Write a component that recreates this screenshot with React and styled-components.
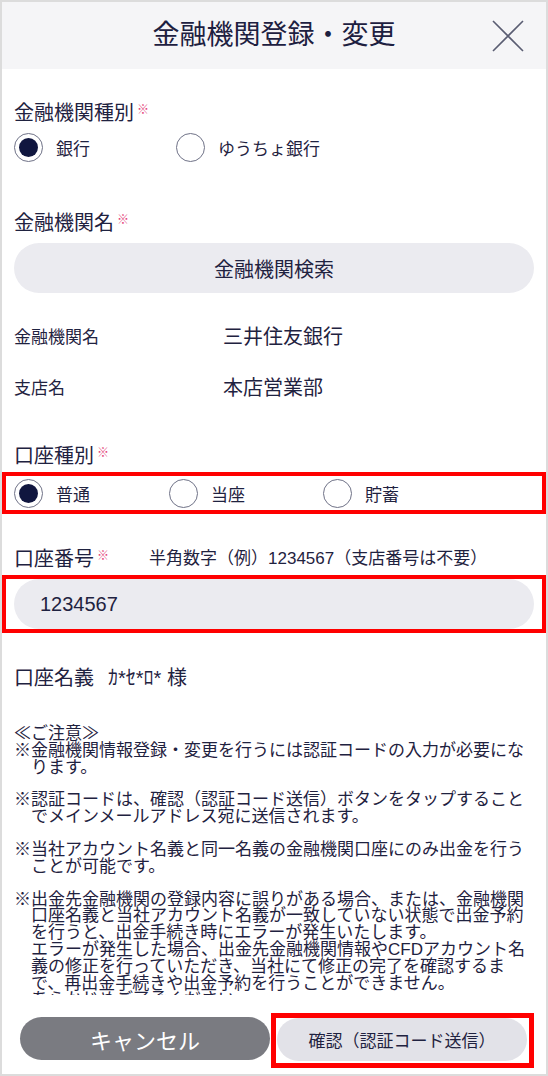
import React from 'react';
import styled, { createGlobalStyle } from 'styled-components';

const GlobalStyle = createGlobalStyle`
  html, body {
    margin: 0;
    padding: 0;
    background: #fff;
  }
  body {
    font-family: "Liberation Sans", "Noto Sans CJK JP", sans-serif;
    color: #1f2240;
  }
  * {
    box-sizing: border-box;
  }
  button, input {
    font-family: inherit;
  }
`;

const Frame = styled.div`
  width: 548px;
  height: 1076px;
  border: 2px solid #dcdcdc;
  display: flex;
  flex-direction: column;
  overflow: hidden;
  background: #fff;
`;

const Header = styled.header`
  flex: none;
  height: 67px;
  background: #f5f5f7;
  display: grid;
  grid-template-columns: 1fr auto 1fr;
  align-items: center;
  padding: 0 22px;
`;

const Title = styled.h1`
  grid-column: 2;
  margin: 0;
  font-size: 27px;
  font-weight: 400;
  color: #1d2040;
  line-height: 1;
`;

const CloseButton = styled.button`
  justify-self: end;
  width: 32px;
  height: 32px;
  padding: 0;
  border: none;
  background: none;
  cursor: pointer;
  display: flex;
`;

const Body = styled.main`
  flex: 1;
  min-height: 0;
  overflow: hidden;
  padding: 30px 12px 0;
`;

const Label = styled.div`
  display: flex;
  align-items: flex-start;
  margin-top: ${p => p.$mt || 0}px;
  font-size: 20px;
  line-height: 28px;
  white-space: nowrap;
`;

const Required = styled.span`
  margin: 5px 0 0 3px;
  font-size: 12px;
  line-height: 1;
  color: #e4467c;
`;

const Hint = styled.span`
  margin-left: 40px;
  font-size: 17px;
`;

const Holder = styled.span`
  margin-left: 14px;
`;

const RadioRow = styled.div`
  display: flex;
  align-items: center;
  height: 30px;
  margin-top: ${p => p.$mt || 0}px;
`;

const Option = styled.label`
  display: flex;
  align-items: center;
  gap: 13px;
  width: ${p => p.$w}px;
  font-size: 17px;
  cursor: pointer;
`;

const Circle = styled.span`
  flex: none;
  width: 29px;
  height: 29px;
  border-radius: 50%;
  border: 1.5px solid #6f7287;
  display: flex;
  align-items: center;
  justify-content: center;

  &::after {
    content: '';
    width: 19px;
    height: 19px;
    border-radius: 50%;
    background: ${p => (p.$on ? '#10163f' : 'transparent')};
  }
`;

const Highlight = styled.div`
  border: ${p => p.$bw || 4}px solid #ff0000;
  margin: ${p => p.$mt || 0}px -12px 0;
  padding: ${p => p.$pad};
`;

const PillButton = styled.button`
  display: block;
  width: 100%;
  height: 50px;
  margin-top: 6px;
  border: none;
  border-radius: 25px;
  background: #ebebf0;
  color: #1f2240;
  font-size: 20px;
`;

const InfoRow = styled.div`
  display: grid;
  grid-template-columns: 209px 1fr;
  align-items: center;
  height: 28px;
  margin-top: ${p => p.$mt || 0}px;
`;

const InfoLabel = styled.span`
  font-size: 17px;
`;

const InfoValue = styled.span`
  font-size: 20px;
`;

const NumberInput = styled.input`
  display: block;
  width: 100%;
  height: 50px;
  border: none;
  border-radius: 25px;
  background: #ebebf0;
  padding: 0 26px;
  font-size: 20px;
  color: #1f2240;
  outline: none;
`;

const Notes = styled.div`
  margin-top: 34px;
  font-size: 17px;
  line-height: 16.8px;
  white-space: nowrap;
`;

const Note = styled.p`
  margin: ${p => (p.$first ? 0 : 16)}px 0 0;
  padding-left: 17px;
  text-indent: -17px;
`;

const Footer = styled.footer`
  flex: none;
  height: 79px;
  display: flex;
  align-items: flex-start;
  padding: 18px 0 0 18px;
`;

const CancelButton = styled.button`
  width: 250px;
  height: 43px;
  margin-top: 4px;
  border: none;
  border-radius: 22px;
  background: #7a7b81;
  color: #fff;
  font-size: 22px;
`;

const ConfirmFrame = styled.div`
  margin-left: 1px;
  border: 5px solid #ff0000;
  padding: 0 2px 2px 1px;
`;

const ConfirmButton = styled.button`
  display: block;
  width: 250px;
  height: 43px;
  border: none;
  border-radius: 22px;
  background: #e2e2e8;
  color: #1f2240;
  font-size: 17px;
`;

const notes = [
  ['※金融機関情報登録・変更を行うには認証コードの入力が必要にな', 'ります。'],
  ['※認証コードは、確認（認証コード送信）ボタンをタップすること', 'でメインメールアドレス宛に送信されます。'],
  ['※当社アカウント名義と同一名義の金融機関口座にのみ出金を行う', 'ことが可能です。'],
  [
    '※出金先金融機関の登録内容に誤りがある場合、または、金融機関',
    '口座名義と当社アカウント名義が一致していない状態で出金予約',
    'を行うと、出金手続き時にエラーが発生いたします。',
    'エラーが発生した場合、出金先金融機関情報やCFDアカウント名',
    '義の修正を行っていただき、当社にて修正の完了を確認するま',
    'で、再出金手続きや出金予約を行うことができません。',
    'あらかじめご了承ください。',
  ],
];

const Radio = ({ label, on, w }) => (
  <Option $w={w}>
    <Circle $on={on} />
    {label}
  </Option>
);

const App = () => {
  return (
    <>
      <GlobalStyle />
      <Frame>
        <Header>
          <Title>金融機関登録・変更</Title>
          <CloseButton aria-label="閉じる">
            <svg width="32" height="32" viewBox="0 0 32 32">
              <path d="M1 1 L31 31 M31 1 L1 31" stroke="#5a5d72" strokeWidth="1.6" fill="none" />
            </svg>
          </CloseButton>
        </Header>

        <Body>
          <Label>
            金融機関種別<Required>※</Required>
          </Label>
          <RadioRow $mt={5}>
            <Radio label="銀行" on w={162} />
            <Radio label="ゆうちょ銀行" w={200} />
          </RadioRow>

          <Label $mt={47}>
            金融機関名<Required>※</Required>
          </Label>
          <PillButton>金融機関検索</PillButton>

          <InfoRow $mt={28}>
            <InfoLabel>金融機関名</InfoLabel>
            <InfoValue>三井住友銀行</InfoValue>
          </InfoRow>
          <InfoRow $mt={23}>
            <InfoLabel>支店名</InfoLabel>
            <InfoValue>本店営業部</InfoValue>
          </InfoRow>

          <Label $mt={42}>
            口座種別<Required>※</Required>
          </Label>
          <Highlight $mt={2} $pad="2px 8px">
            <RadioRow>
              <Radio label="普通" on w={155} />
              <Radio label="当座" w={154} />
              <Radio label="貯蓄" w={150} />
            </RadioRow>
          </Highlight>

          <Label $mt={31}>
            口座番号<Required>※</Required>
            <Hint>半角数字（例）1234567（支店番号は不要）</Hint>
          </Label>
          <Highlight $mt={2} $pad="0 8px">
            <NumberInput defaultValue="1234567" inputMode="numeric" />
          </Highlight>

          <Label $mt={31}>
            口座名義<Holder>ｶ*ｾ*ﾛ* 様</Holder>
          </Label>

          <Notes>
            <div>≪ご注意≫</div>
            {notes.map((lines, i) => (
              <Note key={i} $first={i === 0}>
                {lines.map((line, j) => (
                  <React.Fragment key={j}>
                    {j > 0 && <br />}
                    {line}
                  </React.Fragment>
                ))}
              </Note>
            ))}
          </Notes>
        </Body>

        <Footer>
          <CancelButton>キャンセル</CancelButton>
          <ConfirmFrame>
            <ConfirmButton>確認（認証コード送信）</ConfirmButton>
          </ConfirmFrame>
        </Footer>
      </Frame>
    </>
  );
};

export default App;
